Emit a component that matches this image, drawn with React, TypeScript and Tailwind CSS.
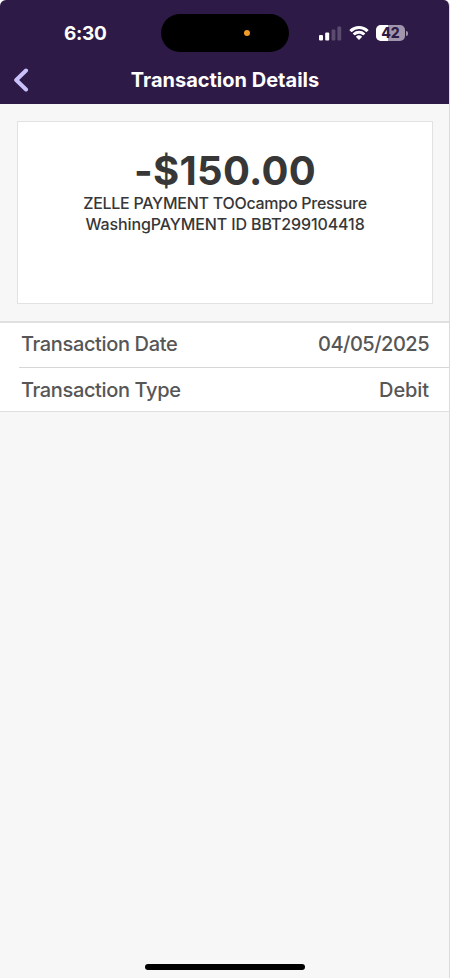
interface DetailRow {
  label: string;
  value: string;
  valueClass: string;
}

const rows: DetailRow[] = [
  {
    label: "Transaction Date",
    value: "04/05/2025",
    valueClass: "tracking-[-0.5px]",
  },
  {
    label: "Transaction Type",
    value: "Debit",
    valueClass: "tracking-[-0.1px]",
  },
];

function SignalIcon() {
  return (
    <svg className="w-[23px] h-[15px]" viewBox="0 0 23 15" fill="white">
      <rect x="0" y="9" width="4" height="5.5" rx="1.1" />
      <rect x="6.2" y="6.5" width="4" height="8" rx="1.1" />
      <rect x="12.6" y="3.5" width="3.8" height="11" rx="1.1" opacity="0.22" />
      <rect x="18.4" y="0.5" width="3.8" height="14" rx="1.1" opacity="0.22" />
    </svg>
  );
}

function WifiIcon() {
  return (
    <svg className="w-5 h-[15px]" viewBox="0 0 20 15" fill="white">
      <path d="M10 3.1c2.7 0 5.2 1.05 7.1 2.9.15.14.37.14.52 0l1.7-1.6a.38.38 0 0 0 0-.54 13.4 13.4 0 0 0-18.64 0 .38.38 0 0 0 0 .54L2.38 6c.15.14.37.14.52 0A10.2 10.2 0 0 1 10 3.1Z" />
      <path d="M10 7.7c1.5 0 2.9.55 4 1.55.15.14.38.14.53 0l1.55-1.53a.38.38 0 0 0 0-.54 8.8 8.8 0 0 0-12.16 0 .38.38 0 0 0 0 .54l1.55 1.53c.15.14.38.14.53 0A6 6 0 0 1 10 7.7Z" />
      <path d="M12.95 11.1a.37.37 0 0 0-.01-.55 4.4 4.4 0 0 0-5.88 0 .37.37 0 0 0-.01.55l2.68 2.72c.15.15.39.15.54 0l2.68-2.72Z" />
    </svg>
  );
}

function Battery({ level }: { level: number }) {
  return (
    <div className="flex items-center gap-px">
      <div className="relative w-[29px] h-4 rounded-[5px] overflow-hidden bg-[#a195ab]">
        <div className="h-full bg-white" style={{ width: `${level}%` }} />
        <span className="absolute inset-0 text-center text-[14px] leading-4 font-extrabold text-[#2e1a47]">
          {level}
        </span>
      </div>
      <div className="w-[2px] h-[5px] rounded-r-full bg-[#a195ab]" />
    </div>
  );
}

function StatusBar() {
  return (
    <div className="flex h-14 pt-[14px]">
      <div className="w-[161px] pl-[64px] pt-[6px] text-[19px] leading-[28px] font-bold tracking-[-0.3px]">
        6:30
      </div>
      <div className="w-32 h-[38px] rounded-full bg-black flex items-center justify-end pr-[39px]">
        <div className="w-[6px] h-[6px] rounded-full bg-[#f29b27]" />
      </div>
      <div className="flex items-center h-[38px] pl-[30px]">
        <SignalIcon />
        <div className="pl-[7px] pr-[7px]">
          <WifiIcon />
        </div>
        <Battery level={42} />
      </div>
    </div>
  );
}

export default function App() {
  return (
    <div className="w-[450px] h-[978px] overflow-hidden bg-white">
      <div className="flex flex-col h-full rounded-t-[6px] overflow-hidden bg-[#f7f7f7] border-r border-[#dcdcdc] font-['Inter',sans-serif]">
        {/* Header */}
        <header className="h-[104px] shrink-0 bg-[#2e1a47] text-white">
          <StatusBar />
          <div className="flex items-center h-12">
            <button aria-label="Back" className="w-[50px] pl-[13px]">
              <svg className="w-4 h-6" viewBox="0 0 16 24" fill="none" stroke="#c9c1fb">
                <path
                  strokeLinecap="round"
                  strokeLinejoin="round"
                  strokeWidth={4}
                  d="M13 2.5L3.2 12L13 21.5"
                />
              </svg>
            </button>
            <h1 className="flex-1 text-center text-[20px] font-bold whitespace-nowrap">
              Transaction Details
            </h1>
            <div className="w-[49px]" />
          </div>
        </header>

        {/* Amount */}
        <section className="mt-[17px] ml-[17px] mr-4 h-[183px] shrink-0 bg-white border border-[#e2e2e2] pt-[27px] text-center text-[#373737]">
          <div className="text-[40px] leading-[44px] font-bold tracking-[0.3px]">
            -$150.00
          </div>
          <p className="text-[16px] leading-[21px] font-medium whitespace-nowrap">
            <span className="block tracking-[-0.27px]">
              ZELLE PAYMENT TOOcampo Pressure
            </span>
            <span className="block tracking-[-0.11px]">
              WashingPAYMENT ID BBT299104418
            </span>
          </p>
        </section>

        {/* Details */}
        <section className="mt-[17px] shrink-0 bg-white border-t-2 border-b border-[#e0e0e0] text-[20px] font-medium text-[#565656]">
          {rows.map((row, i) => (
            <div
              key={row.label}
              className={`ml-[19px] pl-0.5 pr-5 flex items-center justify-between ${
                i > 0 ? "h-11 border-t border-[#d6d6d6]" : "h-11 pb-0.5"
              }`}
            >
              <span className="tracking-[-0.36px]">{row.label}</span>
              <span className={row.valueClass}>{row.value}</span>
            </div>
          ))}
        </section>

        {/* Home indicator */}
        <div className="mt-auto mb-2 ml-[145px] w-40 h-[6px] rounded-full bg-black" />
      </div>
    </div>
  );
}
